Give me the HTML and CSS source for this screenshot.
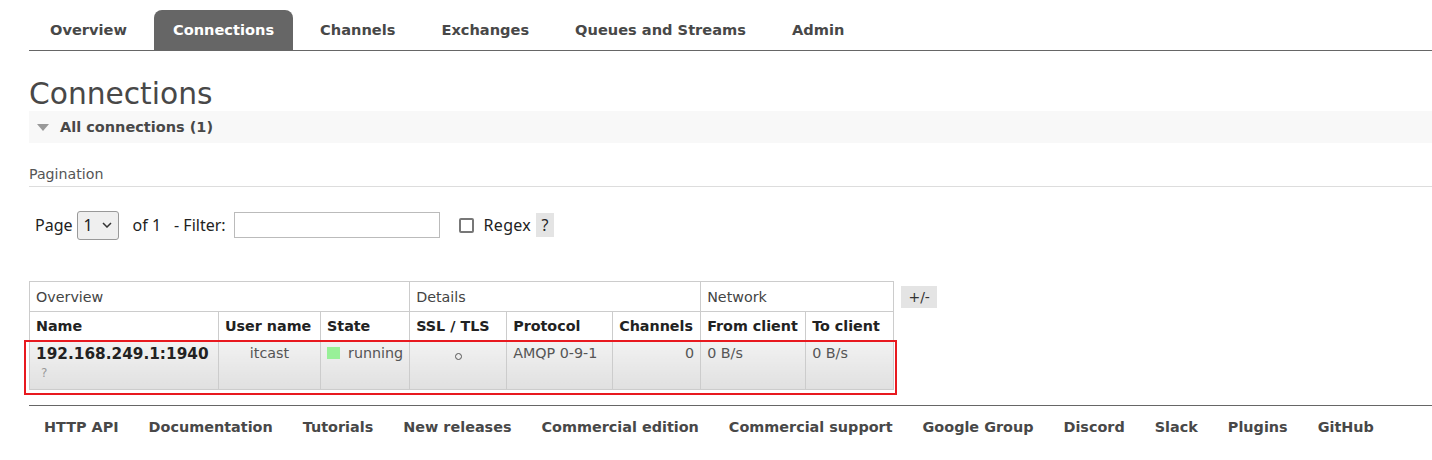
FILE: index.html
```html
<!DOCTYPE html>
<html>
<head>
<meta charset="utf-8">
<link rel="stylesheet" href="styles.css">
</head>
<body>
<div class="page">
  <nav class="menu">
    <a class="tab">Overview</a>
    <a class="tab active">Connections</a>
    <a class="tab">Channels</a>
    <a class="tab">Exchanges</a>
    <a class="tab">Queues and Streams</a>
    <a class="tab">Admin</a>
  </nav>

  <h1 class="title">Connections</h1>
  <div class="section-head"><span class="tri"></span><span>All connections (1)</span></div>

  <div class="pag-label">Pagination</div>
  <div class="pag-row">
    <span>Page</span>
    <span class="select">1 <svg width="10" height="6" viewBox="0 0 10 6"><path d="M1 1 L5 5 L9 1" fill="none" stroke="#333" stroke-width="1.5"/></svg></span>
    <span class="of">of 1</span>
    <span class="filter">- Filter:</span>
    <span class="input"></span>
    <span class="check"></span>
    <span class="regex">Regex</span>
    <span class="help">?</span>
  </div>

  <div class="table-wrap">
    <table class="list">
      <tr class="group">
        <th colspan="3">Overview</th>
        <th colspan="3">Details</th>
        <th colspan="2">Network</th>
      </tr>
      <tr class="cols">
        <th class="c-name">Name</th>
        <th class="c-user">User name</th>
        <th class="c-state">State</th>
        <th class="c-ssl">SSL / TLS</th>
        <th class="c-proto">Protocol</th>
        <th class="c-chan">Channels</th>
        <th class="c-from">From client</th>
        <th class="c-to">To client</th>
      </tr>
      <tr class="data">
        <td><div class="conn">192.168.249.1:1940</div><div class="q">?</div></td>
        <td class="center">itcast</td>
        <td><span class="state-box"></span>running</td>
        <td class="center"><span class="ring"></span></td>
        <td>AMQP 0-9-1</td>
        <td class="right">0</td>
        <td>0 B/s</td>
        <td>0 B/s</td>
      </tr>
    </table>
    <span class="plusminus">+/-</span>
    <div class="highlight"></div>
  </div>

  <footer class="footer">
    <a>HTTP API</a>
    <a>Documentation</a>
    <a>Tutorials</a>
    <a>New releases</a>
    <a>Commercial edition</a>
    <a>Commercial support</a>
    <a>Google Group</a>
    <a>Discord</a>
    <a>Slack</a>
    <a>Plugins</a>
    <a>GitHub</a>
  </footer>
</div>
</body>
</html>
```

FILE: styles.css
```css
html, body {
  margin: 0;
  padding: 0;
  background: #fff;
}
body {
  font-family: "DejaVu Sans", Verdana, sans-serif;
  color: #484848;
  font-size: 14px;
}
.page {
  padding-left: 29px;
}
.menu {
  display: flex;
  gap: 8px;
  padding: 10px 0 0 2px;
  border-bottom: 1px solid #666;
  height: 40px;
}
.tab {
  display: block;
  padding: 0 19px;
  line-height: 40px;
  font-weight: bold;
  font-size: 14.6px;
  color: #484848;
  border-radius: 8px 8px 0 0;
}
.tab.active {
  background: #666;
  color: #fff;
}
.title {
  margin: 0;
  padding-top: 25px;
  font-size: 29.7px;
  font-weight: normal;
  line-height: 35px;
  color: #484848;
}
.section-head {
  display: flex;
  align-items: center;
  height: 32px;
  background: #f8f8f8;
  font-weight: bold;
  font-size: 14.5px;
  color: #484848;
}
.tri {
  width: 0;
  height: 0;
  border-left: 6px solid transparent;
  border-right: 6px solid transparent;
  border-top: 7px solid #999;
  margin: 0 11px 0 8px;
}
.pag-label {
  margin-top: 22px;
  padding-bottom: 3px;
  border-bottom: 1px solid #ddd;
  font-size: 14.2px;
  line-height: 18px;
  color: #555;
}
.pag-row {
  display: flex;
  align-items: center;
  margin-top: 23px;
  padding-left: 6px;
  height: 30px;
  font-family: "Noto Sans", sans-serif;
  font-size: 16px;
  color: #222;
}
.select {
  display: flex;
  align-items: center;
  justify-content: space-between;
  box-sizing: border-box;
  width: 42px;
  height: 29px;
  margin-left: 4px;
  padding: 0 6px 0 6px;
  border: 1px solid #999;
  border-radius: 3px;
  background: #efefef;
  font-size: 16px;
}
.of {
  margin-left: 14px;
}
.filter {
  margin-left: 13px;
}
.input {
  box-sizing: border-box;
  width: 206px;
  height: 26px;
  margin-left: 8px;
  border: 1px solid #bbb;
}
.check {
  box-sizing: border-box;
  width: 15px;
  height: 15px;
  margin-left: 19px;
  border: 2px solid #777;
  border-radius: 2px;
}
.regex {
  margin-left: 10px;
  letter-spacing: 0.3px;
}
.help {
  margin-left: 5px;
  width: 18px;
  height: 24px;
  line-height: 24px;
  text-align: center;
  background: #e4e4e4;
}
.table-wrap {
  position: relative;
  display: flex;
  align-items: flex-start;
  margin-top: 41px;
  height: 114px;
}
.list {
  border-collapse: collapse;
  font-size: 14.3px;
}
.list th, .list td {
  border: 1px solid #ccc;
  padding: 0 6px;
  text-align: left;
  white-space: nowrap;
}
.group th {
  height: 29px;
  font-weight: normal;
  color: #444;
}
.cols th {
  height: 28px;
  font-weight: bold;
  color: #222;
}
.c-name { width: 176px; }
.c-user { width: 89px; }
.c-state { width: 76px; }
.c-ssl { width: 84px; }
.c-proto { width: 93px; }
.c-chan { width: 75px; }
.c-from { width: 92px; }
.c-to { width: 75px; }
.data td {
  height: 49px;
  vertical-align: top;
  padding-top: 4px;
  background: linear-gradient(#f2f2f2, #e0e0e0);
  color: #555;
  box-sizing: border-box;
}
.data .center { text-align: center; }
.data .right { text-align: right; }
.conn {
  font-weight: bold;
  color: #222;
  font-size: 15.3px;
}
.q {
  color: #999;
  font-size: 12px;
  margin-top: 3px;
  padding-left: 5px;
}
.ring {
  display: inline-block;
  box-sizing: border-box;
  width: 7px;
  height: 7px;
  border: 1px solid #555;
  border-radius: 50%;
  margin-top: 8px;
  vertical-align: top;
}
.state-box {
  display: inline-block;
  width: 13px;
  height: 12px;
  background: #98f098;
  margin-right: 8px;
  vertical-align: -1px;
}
.plusminus {
  margin: 5px 0 0 7px;
  width: 36px;
  height: 22px;
  line-height: 22px;
  text-align: center;
  background: #e4e4e4;
  font-size: 14px;
  color: #333;
}
.highlight {
  position: absolute;
  left: -5px;
  top: 59px;
  width: 869px;
  height: 51px;
  border: 2px solid #e8191f;
}
.footer {
  display: flex;
  gap: 30px;
  padding: 11px 0 0 15px;
  border-top: 1px solid #666;
  margin-top: 10px;
  font-weight: bold;
  font-size: 14.4px;
  line-height: 20px;
  color: #484848;
}
```
